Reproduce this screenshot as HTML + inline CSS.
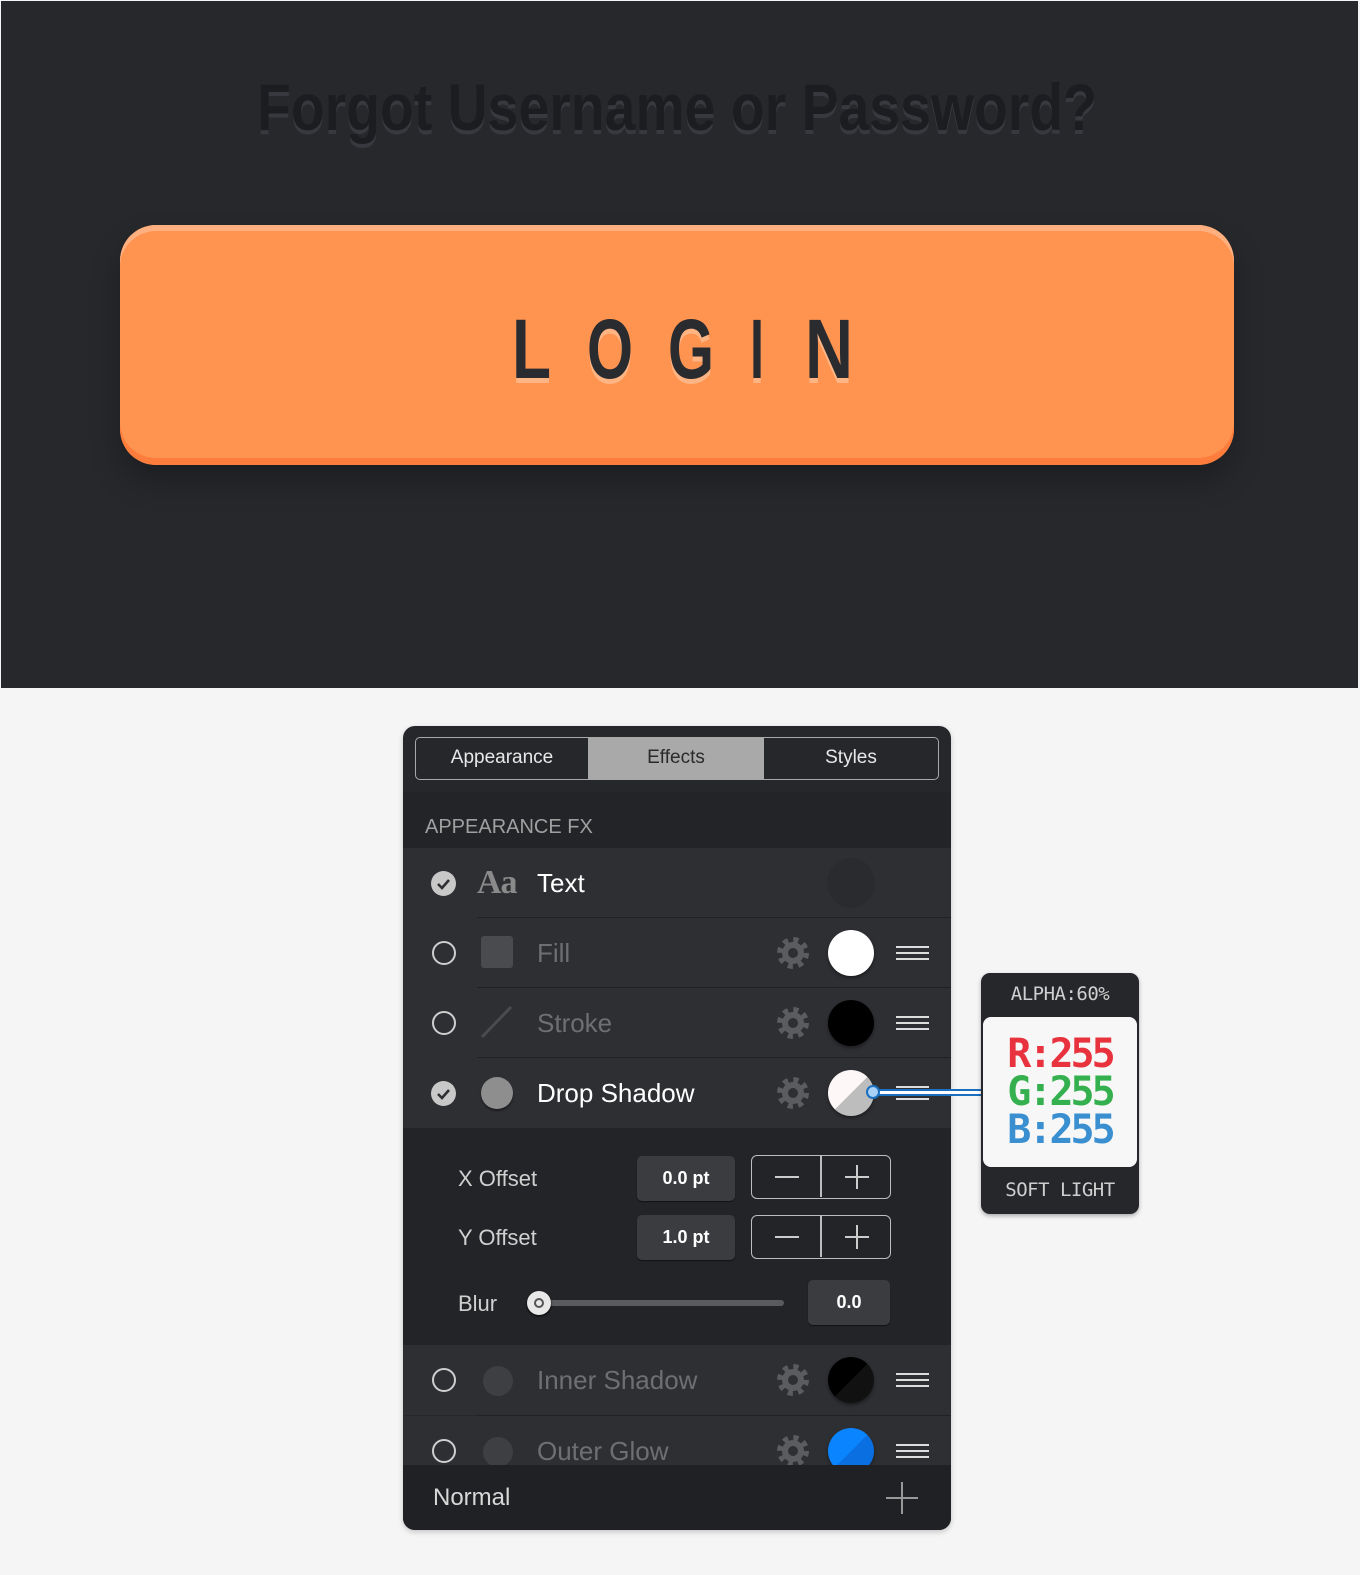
<!DOCTYPE html>
<html><head><meta charset="utf-8">
<style>
*{margin:0;padding:0;box-sizing:border-box}
body{width:1360px;height:1575px;background:#f5f5f5;position:relative;overflow:hidden;font-family:"Liberation Sans",sans-serif}
.a{position:absolute}
#top{left:1px;top:1px;width:1357px;height:687px;background:#27282c}
#btn{left:120px;top:225px;width:1114px;height:240px;border-radius:36px;background:#ff9350;
 box-shadow:inset 0 6px 0 #ffb081, inset 0 -7px 0 #ff7d3c, 0 16px 30px rgba(0,0,0,.25)}
#panel{left:403px;top:726px;width:548px;height:804px;border-radius:12px;background:#26272b;overflow:hidden;box-shadow:0 2px 6px rgba(0,0,0,.2)}
.tabs{left:12px;top:11px;width:524px;height:43px;border:1.5px solid #a8a8a8;border-radius:5px;overflow:hidden;display:flex}
.tabs div{color:#e8e8e8;font-size:19px;line-height:40px;text-align:center}
.row{left:0;width:548px;height:70px;background:#2e2f33}
.div{left:74px;width:474px;height:1px;background:#202124}
.lbl{left:134px;font-size:26px;line-height:70px;top:0}
.rad{left:29px;top:23px;width:24px;height:24px;border-radius:50%;border:2px solid #cfcfcf}
.chk{left:28px;top:23px;width:25px;height:25px;border-radius:50%;background:#c8c8c8}
.sw{left:425px;top:12px;width:46px;height:46px;border-radius:50%;box-shadow:0 2px 3px rgba(0,0,0,.4)}
.ham{left:493px;top:28px;width:33px;height:14px;border-top:2px solid #ddd;border-bottom:2px solid #ddd}
.ham:after{content:"";position:absolute;left:0;top:4px;width:33px;height:2px;background:#ddd}
.gear{left:372px;top:17px}
.dlabel{font-size:22px;color:#d0d0d0}
.vbox{background:#3b3c40;border-radius:5px;color:#fff;font-weight:bold;font-size:18px;text-align:center;box-shadow:0 1px 1px rgba(0,0,0,.5)}
.step{width:140px;height:44px;border:1.5px solid #bdbdbd;border-radius:6px}
.step:before{content:"";position:absolute;left:68px;top:0;width:1.5px;height:41px;background:#bdbdbd}
.mn{position:absolute;left:23px;top:20px;width:24px;height:2px;background:#ccc}
.pl1{position:absolute;left:93px;top:20px;width:24px;height:2px;background:#ccc}
.pl2{position:absolute;left:104px;top:9px;width:2px;height:24px;background:#ccc}
#tip{left:981px;top:973px;width:158px;height:241px;border-radius:9px;background:#26272b;box-shadow:0 2px 4px rgba(0,0,0,.3)}
.mono{font-family:"DejaVu Sans Mono","Liberation Mono",monospace}
</style></head><body>
<div id="top" class="a"></div>
<svg class="a" style="left:0;top:0" width="1360" height="690">
 <text x="677" y="134" text-anchor="middle" textLength="840" lengthAdjust="spacingAndGlyphs" font-family="Liberation Sans" font-weight="bold" font-size="66" fill="#38393e">Forgot Username or Password?</text>
 <text x="677" y="130" text-anchor="middle" textLength="840" lengthAdjust="spacingAndGlyphs" font-family="Liberation Sans" font-weight="bold" font-size="66" fill="#1c1d20">Forgot Username or Password?</text>
</svg>
<div id="btn" class="a"></div>
<svg class="a" style="left:0;top:0" width="1360" height="690">
 <g font-family="Liberation Sans" font-weight="bold" font-size="84" fill="#ffb483" lengthAdjust="spacingAndGlyphs">
  <text x="512" y="383" textLength="39" lengthAdjust="spacingAndGlyphs">L</text><text x="587" y="383" textLength="46" lengthAdjust="spacingAndGlyphs">O</text><text x="668" y="383" textLength="46" lengthAdjust="spacingAndGlyphs">G</text><text x="750" y="383" textLength="14" lengthAdjust="spacingAndGlyphs">I</text><text x="805" y="383" textLength="48" lengthAdjust="spacingAndGlyphs">N</text>
 </g>
 <g font-family="Liberation Sans" font-weight="bold" font-size="84" fill="#2a2b2f">
  <text x="512" y="378" textLength="39" lengthAdjust="spacingAndGlyphs">L</text><text x="587" y="378" textLength="46" lengthAdjust="spacingAndGlyphs">O</text><text x="668" y="378" textLength="46" lengthAdjust="spacingAndGlyphs">G</text><text x="750" y="378" textLength="14" lengthAdjust="spacingAndGlyphs">I</text><text x="805" y="378" textLength="48" lengthAdjust="spacingAndGlyphs">N</text>
 </g>
</svg>

<svg width="0" height="0" style="position:absolute"><defs>
<g id="g"><circle cx="18" cy="18" r="13" fill="none" stroke="#5b5c60" stroke-width="6" stroke-dasharray="5 5.2"/><circle cx="18" cy="18" r="11" fill="#5b5c60"/><circle cx="18" cy="18" r="5" fill="#2e2f33"/></g>
</defs></svg>

<div id="panel" class="a">
 <div class="a tabs"><div style="width:172px">Appearance</div><div style="width:176px;background:#a9a9a9;color:#2a2a2a">Effects</div><div style="flex:1">Styles</div></div>
 <div class="a" style="left:0;top:66px;width:548px;height:56px;background:#232427"></div>
 <div class="a" style="left:22px;top:90px;font-size:20px;color:#a0a0a0">APPEARANCE FX</div>

 <div class="a row" style="top:122px">
  <div class="a chk"><svg width="25" height="25"><path d="M7 13l4 4 7-8" fill="none" stroke="#2e2f33" stroke-width="2.6"/></svg></div>
  <div class="a" style="left:74px;top:16px;font-family:'Liberation Serif',serif;font-weight:bold;font-size:34px;color:#8a8a8a;letter-spacing:-1px">Aa</div>
  <div class="a lbl" style="color:#fff">Text</div>
  <div class="a" style="left:424px;top:10px;width:48px;height:50px;border-radius:50%;background:#2a2b2e"></div>
 </div>
 <div class="a div" style="top:191px"></div>
 <div class="a row" style="top:192px">
  <div class="a rad"></div>
  <div class="a" style="left:78px;top:18px;width:32px;height:32px;border-radius:3px;background:#4a4b4f"></div>
  <div class="a lbl" style="color:#6e6f73">Fill</div>
  <svg class="a gear" width="36" height="36"><use href="#g"/></svg>
  <div class="a sw" style="background:#fff"></div><div class="a ham"></div>
 </div>
 <div class="a div" style="top:261px"></div>
 <div class="a row" style="top:262px">
  <div class="a rad"></div>
  <svg class="a" style="left:76px;top:16px" width="36" height="36"><path d="M3 33L32 3" stroke="#4a4b4f" stroke-width="3"/></svg>
  <div class="a lbl" style="color:#6e6f73">Stroke</div>
  <svg class="a gear" width="36" height="36"><use href="#g"/></svg>
  <div class="a sw" style="background:#000"></div><div class="a ham"></div>
 </div>
 <div class="a div" style="top:331px"></div>
 <div class="a row" style="top:332px">
  <div class="a chk"><svg width="25" height="25"><path d="M7 13l4 4 7-8" fill="none" stroke="#2e2f33" stroke-width="2.6"/></svg></div>
  <div class="a" style="left:78px;top:19px;width:32px;height:32px;border-radius:50%;background:#8e8e8e;box-shadow:0 2px 2px rgba(0,0,0,.4)"></div>
  <div class="a lbl" style="color:#fff">Drop Shadow</div>
  <svg class="a gear" width="36" height="36"><use href="#g"/></svg>
  <div class="a sw" style="background:linear-gradient(135deg,#fdf7f7 50%,#bdbdbd 50%)"></div><div class="a ham"></div>
 </div>

 <div class="a" style="left:0;top:402px;width:548px;height:217px;background:#232427"></div>
 <div class="a dlabel" style="left:55px;top:440px">X Offset</div>
 <div class="a vbox" style="left:234px;top:430px;width:98px;height:45px;line-height:45px">0.0 pt</div>
 <div class="a step" style="left:348px;top:429px"><i class="mn"></i><i class="pl1"></i><i class="pl2"></i></div>
 <div class="a dlabel" style="left:55px;top:499px">Y Offset</div>
 <div class="a vbox" style="left:234px;top:489px;width:98px;height:45px;line-height:45px">1.0 pt</div>
 <div class="a step" style="left:348px;top:489px"><i class="mn"></i><i class="pl1"></i><i class="pl2"></i></div>
 <div class="a dlabel" style="left:55px;top:565px">Blur</div>
 <div class="a" style="left:136px;top:574px;width:245px;height:6px;border-radius:3px;background:#5a5b5f"></div>
 <div class="a" style="left:124px;top:565px;width:24px;height:24px;border-radius:50%;background:#e8e8e8;box-shadow:0 1px 2px #000"><div class="a" style="left:7px;top:7px;width:10px;height:10px;border-radius:50%;border:2px solid #555"></div></div>
 <div class="a vbox" style="left:405px;top:554px;width:82px;height:45px;line-height:45px">0.0</div>

 <div class="a row" style="top:619px">
  <div class="a rad"></div>
  <div class="a" style="left:80px;top:21px;width:30px;height:30px;border-radius:50%;background:#3e3f43"></div>
  <div class="a lbl" style="color:#6e6f73">Inner Shadow</div>
  <svg class="a gear" width="36" height="36"><use href="#g"/></svg>
  <div class="a sw" style="background:linear-gradient(135deg,#000 50%,#111 50%)"></div><div class="a ham"></div>
 </div>
 <div class="a div" style="top:689px"></div>
 <div class="a row" style="top:690px">
  <div class="a rad"></div>
  <div class="a" style="left:80px;top:21px;width:30px;height:30px;border-radius:50%;background:#3e3f43"></div>
  <div class="a lbl" style="color:#6e6f73">Outer Glow</div>
  <svg class="a gear" width="36" height="36"><use href="#g"/></svg>
  <div class="a sw" style="background:linear-gradient(135deg,#0a84ff 50%,#0a6fe0 50%)"></div><div class="a ham"></div>
 </div>
 <div class="a" style="left:0;top:739px;width:548px;height:65px;background:#202124"></div>
 <div class="a" style="left:30px;top:758px;font-size:24px;color:#d8d8d8">Normal</div>
 <div class="a" style="left:483px;top:771px;width:32px;height:1.5px;background:#999"></div>
 <div class="a" style="left:498px;top:756px;width:1.5px;height:32px;background:#999"></div>
</div>

<div class="a" style="left:871px;top:1089px;width:112px;height:7px;border-top:2px solid #1a6fc0;border-bottom:2px solid #1a6fc0;background:#fff"></div>
<div class="a" style="left:866px;top:1085px;width:14px;height:14px;border-radius:50%;background:#a9d0f5;border:2px solid #1a6fc0"></div>

<div id="tip" class="a">
 <div class="a mono" style="left:0;width:158px;top:10px;text-align:center;font-size:19px;color:#cfcfcf;letter-spacing:-0.5px">ALPHA:60%</div>
 <div class="a" style="left:2px;top:44px;width:154px;height:150px;border-radius:8px;background:#f7f7f7"></div>
 <div class="a mono" style="left:0;width:158px;top:62px;text-align:center;font-size:40px;line-height:38px;font-weight:bold;letter-spacing:-3px">
  <div style="color:#e8333e">R:255</div><div style="color:#35b04f">G:255</div><div style="color:#3a8fd0">B:255</div></div>
 <div class="a mono" style="left:0;width:158px;top:206px;text-align:center;font-size:19px;color:#cfcfcf;letter-spacing:-0.5px">SOFT LIGHT</div>
</div>
</body></html>
